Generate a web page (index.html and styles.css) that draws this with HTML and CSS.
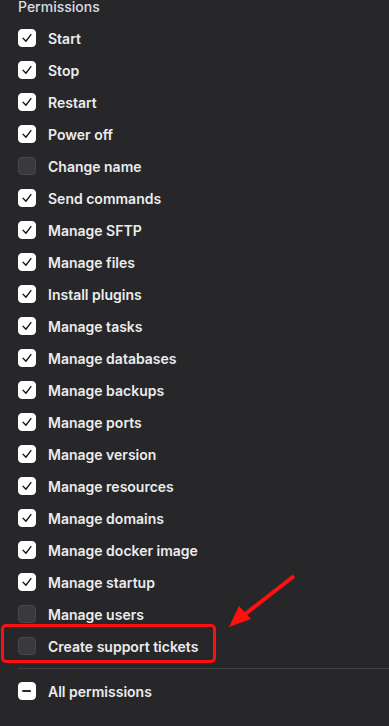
FILE: index.html
```
<!DOCTYPE html>
<html lang="en">
<head>
    <meta charset="UTF-8">
    <meta name="viewport" content="width=device-width, initial-scale=1.0">
    <title>Permissions</title>
    <link rel="stylesheet" href="styles.css">
</head>
<body>

<div class="panel">
    <div class="title">Permissions</div>

    <div class="perm-list">
        <label class="perm"><span class="box on"><svg viewBox="0 0 18 18"><path d="M4.6 9.2 L7.8 12.6 L13.4 5.2"/></svg></span>Start</label>
        <label class="perm"><span class="box on"><svg viewBox="0 0 18 18"><path d="M4.6 9.2 L7.8 12.6 L13.4 5.2"/></svg></span>Stop</label>
        <label class="perm"><span class="box on"><svg viewBox="0 0 18 18"><path d="M4.6 9.2 L7.8 12.6 L13.4 5.2"/></svg></span>Restart</label>
        <label class="perm"><span class="box on"><svg viewBox="0 0 18 18"><path d="M4.6 9.2 L7.8 12.6 L13.4 5.2"/></svg></span>Power off</label>
        <label class="perm"><span class="box"></span>Change name</label>
        <label class="perm"><span class="box on"><svg viewBox="0 0 18 18"><path d="M4.6 9.2 L7.8 12.6 L13.4 5.2"/></svg></span>Send commands</label>
        <label class="perm"><span class="box on"><svg viewBox="0 0 18 18"><path d="M4.6 9.2 L7.8 12.6 L13.4 5.2"/></svg></span>Manage SFTP</label>
        <label class="perm"><span class="box on"><svg viewBox="0 0 18 18"><path d="M4.6 9.2 L7.8 12.6 L13.4 5.2"/></svg></span>Manage files</label>
        <label class="perm"><span class="box on"><svg viewBox="0 0 18 18"><path d="M4.6 9.2 L7.8 12.6 L13.4 5.2"/></svg></span>Install plugins</label>
        <label class="perm"><span class="box on"><svg viewBox="0 0 18 18"><path d="M4.6 9.2 L7.8 12.6 L13.4 5.2"/></svg></span>Manage tasks</label>
        <label class="perm"><span class="box on"><svg viewBox="0 0 18 18"><path d="M4.6 9.2 L7.8 12.6 L13.4 5.2"/></svg></span>Manage databases</label>
        <label class="perm"><span class="box on"><svg viewBox="0 0 18 18"><path d="M4.6 9.2 L7.8 12.6 L13.4 5.2"/></svg></span>Manage backups</label>
        <label class="perm"><span class="box on"><svg viewBox="0 0 18 18"><path d="M4.6 9.2 L7.8 12.6 L13.4 5.2"/></svg></span>Manage ports</label>
        <label class="perm"><span class="box on"><svg viewBox="0 0 18 18"><path d="M4.6 9.2 L7.8 12.6 L13.4 5.2"/></svg></span>Manage version</label>
        <label class="perm"><span class="box on"><svg viewBox="0 0 18 18"><path d="M4.6 9.2 L7.8 12.6 L13.4 5.2"/></svg></span>Manage resources</label>
        <label class="perm"><span class="box on"><svg viewBox="0 0 18 18"><path d="M4.6 9.2 L7.8 12.6 L13.4 5.2"/></svg></span>Manage domains</label>
        <label class="perm"><span class="box on"><svg viewBox="0 0 18 18"><path d="M4.6 9.2 L7.8 12.6 L13.4 5.2"/></svg></span>Manage docker image</label>
        <label class="perm"><span class="box on"><svg viewBox="0 0 18 18"><path d="M4.6 9.2 L7.8 12.6 L13.4 5.2"/></svg></span>Manage startup</label>
        <label class="perm"><span class="box"></span>Manage users</label>
        <label class="perm highlight"><span class="box"></span>Create support tickets</label>
    </div>

    <div class="divider"></div>

    <label class="perm"><span class="box on"><svg viewBox="0 0 18 18"><path class="dash" d="M4.5 9 H12.5"/></svg></span>All permissions</label>

    <!-- annotation arrow -->
    <svg class="arrow" viewBox="0 0 389 726">
        <line x1="294" y1="576" x2="244" y2="615"/>
        <polygon points="229,627 239,606 251,619"/>
    </svg>
</div>

</body>
</html>
```

FILE: styles.css
```
body {
    margin: 0;
    padding: 0;
    background-color: #27272a;
    font-family: Inter, "Noto Sans", Arial, sans-serif;
    color: #e8e8ea;
}
.panel {
    position: relative;
    height: 726px;
    padding-left: 18px;
    overflow: hidden;
}
.title {
    font-size: 14px;
    line-height: 14px;
    font-weight: 500;
    color: #dcdce0;
    margin-bottom: 8px;
}
.perm-list {
    display: flex;
    flex-direction: column;
}
.perm {
    position: relative;
    display: flex;
    align-items: center;
    gap: 12px;
    height: 32px;
    font-size: 14px;
    font-weight: 600;
    color: #ececee;
}
.box {
    width: 18px;
    height: 18px;
    box-sizing: border-box;
    border-radius: 4px;
    background-color: #3a3a3e;
    border: 1px solid #47474c;
    display: flex;
    flex-shrink: 0;
}
.box.on {
    background-color: #ffffff;
    border-color: #ffffff;
}
.box svg {
    width: 16px;
    height: 16px;
    fill: none;
    stroke: #1b1b1d;
    stroke-width: 1.6;
    stroke-linecap: round;
    stroke-linejoin: round;
}
.box svg .dash {
    stroke-width: 2.2;
    stroke: #2a2a2d;
}
.highlight::after {
    content: "";
    position: absolute;
    left: -17px;
    top: -6px;
    width: 209px;
    height: 33px;
    border: 3px solid #ff1010;
    border-radius: 5px;
}
.divider {
    height: 1px;
    background-color: #3f3f44;
    margin: 6px 0 6px 0;
}
.arrow {
    position: absolute;
    left: 0;
    top: 0;
    width: 389px;
    height: 726px;
    pointer-events: none;
}
.arrow line {
    stroke: #ff1010;
    stroke-width: 4;
}
.arrow polygon {
    fill: #ff1010;
}
```
